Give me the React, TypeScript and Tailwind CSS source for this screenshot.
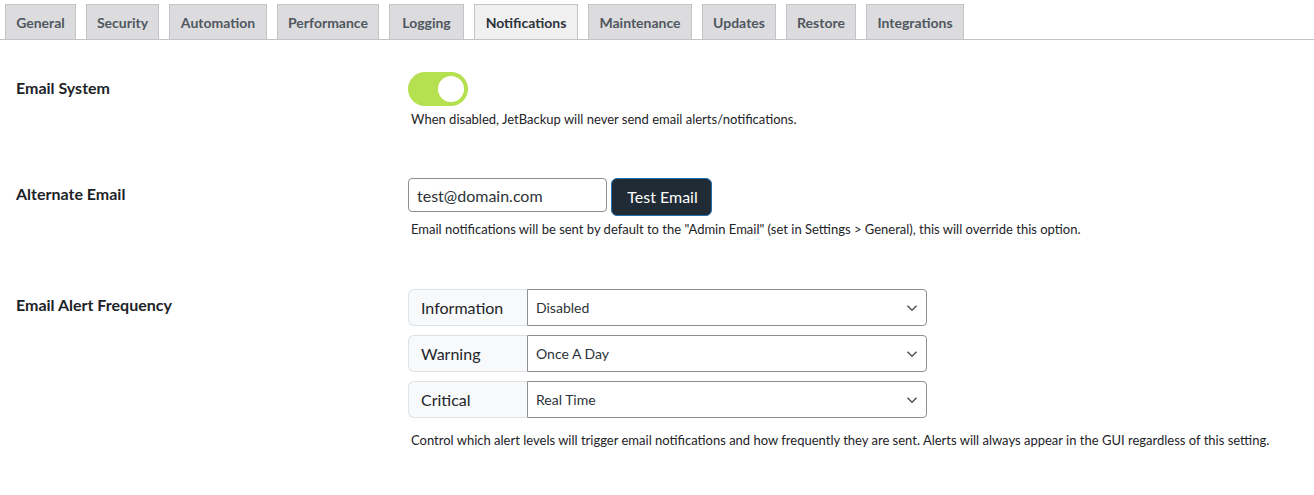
import { useState } from "react";

const tabs = [
  { name: "General", w: 71 },
  { name: "Security", w: 73 },
  { name: "Automation", w: 98 },
  { name: "Performance", w: 102 },
  { name: "Logging", w: 75 },
  { name: "Notifications", w: 104 },
  { name: "Maintenance", w: 104 },
  { name: "Updates", w: 74 },
  { name: "Restore", w: 70 },
  { name: "Integrations", w: 98 },
];

const levels = [
  { label: "Information", value: "Disabled" },
  { label: "Warning", value: "Once A Day" },
  { label: "Critical", value: "Real Time" },
];

function Chevron() {
  return (
    <svg width="12" height="8" viewBox="0 0 12 8" className="shrink-0">
      <path d="M1.5 1.8 6 6.2l4.5-4.4" fill="none" stroke="#50575e" strokeWidth="1.6" />
    </svg>
  );
}

export default function App() {
  const [enabled, setEnabled] = useState(true);

  return (
    <div className="min-h-[495px] bg-white text-[#1d2327]" style={{ fontFamily: "Lato, 'Open Sans', sans-serif" }}>
      {/* tabs */}
      <div className="flex gap-[10px] pl-[5px] pt-[4px] border-b border-[#c3c4c7]">
        {tabs.map((t) => (
          <div
            key={t.name}
            style={{ width: t.w }}
            className={`h-[35px] flex items-center justify-center border border-b-0 border-[#c3c4c7] text-[14px] font-bold ${
              t.name === "Notifications" ? "bg-[#f0f0f1] text-[#2c3338]" : "bg-[#dcdcde] text-[#50575e]"
            }`}
          >
            {t.name}
          </div>
        ))}
      </div>

      <div className="pl-[16px] pt-[32px]">
        {/* Email System */}
        <div className="grid grid-cols-[392px_1fr]">
          <div className="h-[31px] flex items-center text-[16px] font-bold">Email System</div>
          <div>
            <button
              onClick={() => setEnabled(!enabled)}
              className={`w-[60px] h-[34px] rounded-full flex items-center px-[4px] ${
                enabled ? "bg-[#b5e04f] justify-end" : "bg-[#c3c4c7] justify-start"
              }`}
            >
              <span className="w-[26px] h-[26px] rounded-full bg-white" />
            </button>
            <p className="mt-[5px] ml-[3px] text-[13px] leading-[16px] text-[#1d2327]">
              When disabled, JetBackup will never send email alerts/notifications.
            </p>
          </div>
        </div>

        {/* Alternate Email */}
        <div className="grid grid-cols-[392px_1fr] mt-[51px]">
          <div className="h-[31px] flex items-center text-[16px] font-bold">Alternate Email</div>
          <div>
            <div className="flex items-start gap-[4px]">
              <input
                defaultValue="test@domain.com"
                className="w-[199px] h-[34px] rounded-[4px] border border-[#8c8f94] px-[8px] text-[16px] text-[#2c3338] outline-none"
              />
              <button className="w-[101px] h-[38px] rounded-[6px] bg-[#212b36] border border-[#2271b1] pl-[2px] text-white text-[16px]">
                Test Email
              </button>
            </div>
            <p className="mt-[5px] ml-[3px] text-[13px] leading-[16px]">
              Email notifications will be sent by default to the "Admin Email" (set in Settings &gt; General), this will override this option.
            </p>
          </div>
        </div>

        {/* Email Alert Frequency */}
        <div className="grid grid-cols-[392px_1fr] mt-[52px]">
          <div className="h-[31px] flex items-center text-[16px] font-bold">Email Alert Frequency</div>
          <div>
            <div className="flex flex-col gap-[9px] w-[519px]">
              {levels.map((l) => (
                <div key={l.label} className="flex h-[37px]">
                  <div className="w-[119px] shrink-0 flex items-center pl-[12px] bg-[#f8f9fa] border border-r-0 border-[#dee2e6] rounded-l-[6px] text-[16px] text-[#212529]">
                    {l.label}
                  </div>
                  <div className="flex-1 flex items-center justify-between pl-[8px] pr-[8px] border border-[#8c8f94] rounded-r-[4px] text-[14px] text-[#2c3338]">
                    <span>{l.value}</span>
                    <Chevron />
                  </div>
                </div>
              ))}
            </div>
            <p className="mt-[14px] ml-[3px] text-[13px] leading-[16px]">
              Control which alert levels will trigger email notifications and how frequently they are sent. Alerts will always appear in the GUI regardless of this setting.
            </p>
          </div>
        </div>
      </div>
    </div>
  );
}
